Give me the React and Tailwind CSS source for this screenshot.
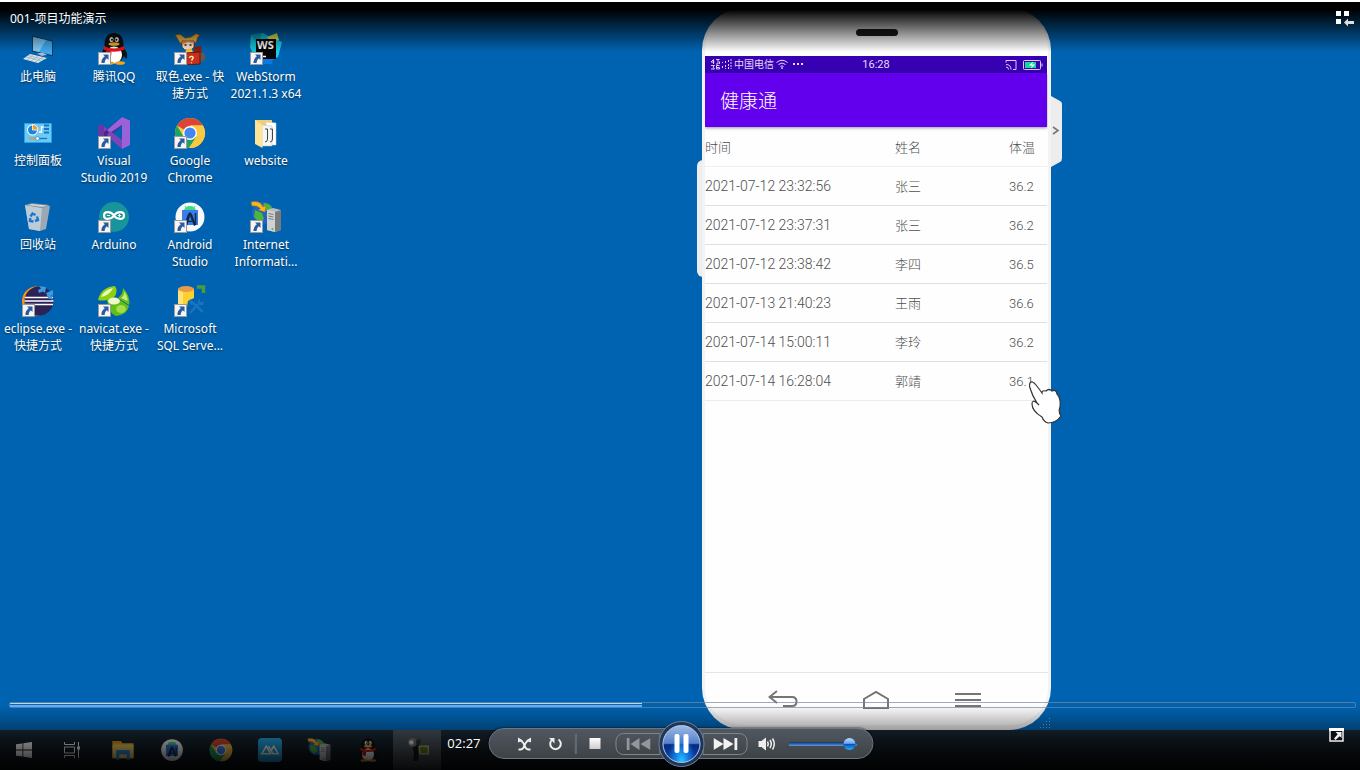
import React, { useState } from 'react';

const records = [
  { time: '2021-07-12 23:32:56', name: '张三', temp: '36.2' },
  { time: '2021-07-12 23:37:31', name: '张三', temp: '36.2' },
  { time: '2021-07-12 23:38:42', name: '李四', temp: '36.5' },
  { time: '2021-07-13 21:40:23', name: '王雨', temp: '36.6' },
  { time: '2021-07-14 15:00:11', name: '李玲', temp: '36.2' },
  { time: '2021-07-14 16:28:04', name: '郭靖', temp: '36.1' },
];

// Desktop and taskbar icons, all on a 32x32 grid
const PcIcon = () => (
  <svg viewBox="0 0 32 32" className="w-full h-full">
    <path d="M10 2.500 31 7.500V23.500L10 18.500Z" fill="#1f3d57" />
    <path d="M11 4 30 8.500V22L11 17.500Z" fill="#3fa9ee" />
    <path d="M11 4 24 7 17 19 11 17.500Z" fill="#7cc9f8" />
    <path d="M15 20.500 20 19.500 25 21.500 20 23Z" fill="#a9bccb" />
    <path d="M8 21 25 25 16 30 1 26Z" fill="#dfe6ec" />
    <path d="M6 22.500 22 26.500M4 24 19 28M11 21.800 5 27M16 23 9 28M21 24 13 29" stroke="#8fa3b3" strokeWidth=".7" />
  </svg>
);

const QQIcon = () => (
  <svg viewBox="0 0 32 32" className="w-full h-full">
    <path d="M7 14Q2 20 4 25L8 21ZM25 14Q31 20 28.500 26L24 21Z" fill="#111" />
    <ellipse cx="16" cy="19.500" rx="10.500" ry="10.500" fill="#111" />
    <path d="M6.500 14Q6 0 16 0T25.500 14Z" fill="#111" />
    <ellipse cx="16" cy="22" rx="8" ry="8.500" fill="#fff" />
    <ellipse cx="11" cy="30" rx="5" ry="1.800" fill="#f3a51b" />
    <ellipse cx="22" cy="30" rx="5" ry="1.800" fill="#f3a51b" />
    <ellipse cx="13.500" cy="6.500" rx="2" ry="2.600" fill="#fff" />
    <ellipse cx="18.800" cy="6.500" rx="2" ry="2.600" fill="#fff" />
    <circle cx="14" cy="6.800" r="1" /><circle cx="18.400" cy="6.800" r="1" />
    <ellipse cx="16" cy="11" rx="5.500" ry="1.800" fill="#f7b21d" />
    <path d="M6 13Q16 18 26 13L26.500 16.500Q16 21 5.500 16.500Z" fill="#e5141c" />
    <path d="M9 17 13.500 18.500 13 24 8.500 23Z" fill="#c90f17" />
  </svg>
);

const JesterIcon = () => (
  <svg viewBox="0 0 32 32" className="w-full h-full">
    <path d="M1 2 6 1 11 5 17 4 22 .5 26 2 24 4 22 10 19 9 9 11 6 10 3 5Z" fill="#e8b64c" stroke="#7a4a12" strokeWidth=".8" />
    <path d="M8 8H20V14L17 17H11L8 14Z" fill="#fbe3cf" stroke="#7b2d14" strokeWidth=".8" />
    <path d="M8 9Q14 5 20 9L18 10 14 9 9 11Z" fill="#d98a34" />
    <path d="M10.500 12h2M15.500 12h2" stroke="#222" strokeWidth="1.700" />
    <path d="M12 17 17 15 20 21 14 24 11 21Z" fill="#f4c542" />
    <path d="M20 14 27 13 28 20 20 19Z" fill="#8e1f12" />
    <circle cx="27" cy="24" r="4.500" fill="#6b5548" />
    <path d="M10 20 26 19V31L10 32Z" fill="#c92f1b" stroke="#4f120a" strokeWidth=".8" />
    <path d="M15.500 25Q16 23 18 23.500T18.500 26L17.500 27.500M17.500 29.300v1" stroke="#ffe9b0" strokeWidth="1.400" fill="none" />
  </svg>
);

const WebStormIcon = () => (
  <svg viewBox="0 0 32 32" className="w-full h-full">
    <path d="M1 2 13 0 20 4 18 26 6 28 0 14Z" fill="#14c3d6" />
    <path d="M1 2 12 0 8 12Z" fill="#0a9fc0" />
    <path d="M17 4 27 0 29 7 24 12Z" fill="#d9e84b" />
    <path d="M24 6 32 9 28 24 20 28Z" fill="#18cdea" />
    <path d="M8 24 24 20 22 31 14 31Z" fill="#0b78e3" />
    <path d="M6 6H26V26H6Z" fill="#060606" />
    <text x="7" y="16" fill="#fff" fontSize="11" fontWeight="700" fontFamily="Noto Sans, sans-serif">WS</text>
    <path d="M9 23.500h7" stroke="#fff" strokeWidth="1.500" />
  </svg>
);

const ControlPanelIcon = () => (
  <svg viewBox="0 0 32 32" className="w-full h-full">
    <rect x="2" y="6" width="28" height="20" rx="1" fill="#2aa3e6" />
    <rect x="3" y="7" width="26" height="18" fill="#6cc9f6" />
    <circle cx="10.500" cy="13" r="5.500" fill="#fff" />
    <circle cx="10.500" cy="13" r="4.500" fill="#1a86d4" />
    <path d="M10.500 13V7.500A5.500 5.500 0 0 1 16 13Z" fill="#f49a25" stroke="#fff" strokeWidth=".8" />
    <path d="M17 15H19.500V10H21.500" stroke="#fff" strokeWidth="1.300" fill="none" />
    <path d="M22 8.500h5M22 12h5M22 15.500h5" stroke="#1a75be" strokeWidth="2" />
    <path d="M7 21.500h18" stroke="#1a75be" strokeWidth="1.300" />
    <path d="M7 21.500h8" stroke="#f49a25" strokeWidth="1.300" />
    <circle cx="15.500" cy="21.500" r="1.800" fill="#fff" stroke="#1c77b8" strokeWidth=".6" />
  </svg>
);

const VisualStudioIcon = () => (
  <svg viewBox="0 0 32 32" className="w-full h-full">
    <path d="M0 9 3 7 25 25 24 32 0 11Z" fill="#7b46b8" />
    <path d="M0 22 3 25 25 8 24 0 0 20Z" fill="#52218a" />
    <path d="M0 9 3 7 6 9.500V22.500L3 25 0 23Z" fill="#6a35a5" />
    <path d="M24 0 32 3.500V28L24 32V8L12 16 9 13Z" fill="#9a62d6" />
    <path d="M24 23 12 14 9 18 24 32Z" fill="#7b46b8" />
  </svg>
);

const ChromeIcon = () => (
  <svg viewBox="0 0 32 32" className="w-full h-full">
    <circle cx="16" cy="16" r="15" fill="#fbc93f" />
    <path d="M16 16 3 8.500A15 15 0 0 1 29 8.500H16Z" fill="#db4437" />
    <path d="M3 8.500A15 15 0 0 0 15 31L22.500 19.750 16 16 9.500 19.750Z" fill="#1da462" />
    <path d="M16 8.500H29A15 15 0 0 1 15 31L22.500 19.750Z" fill="#fbc93f" />
    <circle cx="16" cy="16" r="7" fill="#fff" />
    <circle cx="16" cy="16" r="5.600" fill="#4385f2" />
  </svg>
);

const FolderIcon = () => (
  <svg viewBox="0 0 32 32" className="w-full h-full">
    <path d="M5 3H22V27H5Z" fill="#f1cf72" />
    <path d="M16 5 26 6V28H16Z" fill="#fff" stroke="#c9c9c9" strokeWidth=".5" />
    <path d="M12 8 22 9V29H12Z" fill="#f6f6f6" stroke="#bbb" strokeWidth=".5" />
    <path d="M15 12H17.500V22Q17.500 25 15 25M20 12H22.500V22Q22.500 25 20 25" stroke="#444" fill="none" />
    <path d="M5 3 12.500 8V31L5 27Z" fill="#fce59b" />
  </svg>
);

const RecycleIcon = () => (
  <svg viewBox="0 0 32 32" className="w-full h-full">
    <path d="M3 4 28 5 24 28 18 30 7 28Z" fill="#9aa9b4" />
    <path d="M3 4 20 7 18 30 7 28Z" fill="#bccbd6" />
    <path d="M3 4 10 2 28 4 20 7Z" fill="#7c8d99" />
    <path d="M5 4 10 3 26 4.500 20 6Z" fill="#cdd5da" />
    <path d="M8.500 15.500 10.500 12.500 13.500 14M15 15.500 16 19 13 20M11.500 20.500 8 20 8.200 17" stroke="#1778cf" strokeWidth="2.400" fill="none" />
  </svg>
);

const ArduinoIcon = () => (
  <svg viewBox="0 0 32 32" className="w-full h-full">
    <circle cx="16" cy="16" r="15" fill="#17959a" />
    <path d="M16 14.500C13 10 6 10 6 14.500S13 19 16 14.500 26 10 26 14.500 19 19 16 14.500Z" fill="none" stroke="#fff" strokeWidth="2.200" />
    <path d="M8.800 14.500h3.400M19.800 14.500h3.400M21.500 12.800v3.400" stroke="#fff" strokeWidth="1" />
  </svg>
);

const AndroidStudioIcon = () => (
  <svg viewBox="0 0 32 32" className="w-full h-full">
    <circle cx="16" cy="16" r="14.500" fill="#f7f8f9" />
    <path d="M10 10A6 5 0 0 1 22 10Z" fill="#3ddc84" />
    <path d="M11 5 13 8M21 5 19 8" stroke="#3ddc84" />
    <path d="M8 9H24V24H8Z" fill="#3c7bea" />
    <path d="M10 24 14 13 16 11 18 13 22 24 20 25 16 15 13 25Z" fill="#0b2b48" />
    <path d="M12 19Q16 22 20 19" stroke="#0b2b48" strokeWidth="1.500" fill="none" />
    <path d="M21.500 12v12" stroke="#0b2b48" strokeWidth="1.500" />
  </svg>
);

const IISIcon = () => (
  <svg viewBox="0 0 32 32" className="w-full h-full">
    <circle cx="13" cy="12" r="11" fill="#2463c4" />
    <path d="M14 2Q22 3 22 8L17 10 13 6ZM5 9 12 12 14 18 9 21 4 16Z" fill="#4cb63c" />
    <path d="M16 13 22 11 22 18 18 20Z" fill="#3a9b35" />
    <path d="M1 1Q10-1 13 6L16 4.500 15 11 8.500 9 10.500 7.500Q7 4 2 5Z" fill="#f6b81f" stroke="#b37009" strokeWidth=".6" />
    <path d="M17 9 23 7 31 9V29L25 31 17 29Z" fill="#b9bcbd" />
    <path d="M25 11 31 9V29L25 31Z" fill="#777b7d" />
    <path d="M17 9 25 11V31L17 29Z" fill="#cfd2d3" />
    <path d="M18.500 12.500 23.500 13.500M18.500 15 23.500 16M18.500 17.500 23.500 18.500" stroke="#767a7c" />
    <circle cx="22.500" cy="28" r="1" fill="#43c434" />
  </svg>
);

const EclipseIcon = () => (
  <svg viewBox="0 0 32 32" className="w-full h-full">
    <circle cx="14.500" cy="16" r="14.500" fill="#f7941e" />
    <circle cx="17" cy="16" r="14.500" fill="#2c2255" />
    <path d="M3 12.500H31M2.500 16H31.500M3 19.500H31" stroke="#fff" strokeWidth="1.700" />
    <path d="M17 1 24 2 23 8 21 6.500 17 8 16 5 19 3.500Z" fill="#3d9be5" />
    <path d="M24 8 31 5V11L29 10 31 15 26 13Z" fill="#3d9be5" />
  </svg>
);

const NavicatIcon = () => (
  <svg viewBox="0 0 32 32" className="w-full h-full">
    <path d="M17 1Q3 2 0 15 11 17 17 11 20 6 17 1Z" fill="#8ed00f" />
    <path d="M15 3Q6 5 3 12 12 10 15 3Z" fill="#eefab5" />
    <path d="M25 3Q33 12 31 20L20 13Q25 9 25 3Z" fill="#67bd1b" />
    <path d="M26 6Q30 12 29.500 16L23 13Q27 10 26 6Z" fill="#c5ec73" />
    <path d="M9 15Q15 10 22 15L31 21Q29 30 18 31 11 29 9 15Z" fill="#62bd18" />
    <ellipse cx="16" cy="16" rx="6" ry="3.500" fill="#effac9" />
    <ellipse cx="23" cy="24" rx="5" ry="4" fill="#a4de4b" />
  </svg>
);

const SqlIcon = () => (
  <svg viewBox="0 0 32 32" className="w-full h-full">
    <path d="M4 4H20V13L14 16 12 28H4Z" fill="#fdd02f" />
    <path d="M4 4H9V28H4Z" fill="#fee27a" />
    <ellipse cx="12" cy="4" rx="8" ry="3" fill="#e79a48" />
    <path d="M23 2H29.500V8" stroke="#4b9a3b" strokeWidth="3.500" fill="none" />
    <path d="M16 28 26 17M18 17 29 27" stroke="#1a73bf" strokeWidth="2.500" />
    <path d="M16 14 21 18 18 20 15 18ZM24 15 26 14V17H29L30 16 29 20 25 20Z" fill="#1a73bf" />
  </svg>
);

const ShortcutArrow = () => (
  <svg viewBox="0 0 13 13" className="absolute left-0 bottom-0 w-[13px] h-[13px]">
    <rect x=".5" y=".5" width="12" height="12" fill="#f5f5f5" stroke="#9b9b9b" />
    <path d="M5 2.500H10.500V8L8.800 6.300Q6.500 8 6.500 11H3.500Q3 7 6.800 4.300Z" fill="#2c5aa0" />
  </svg>
);

const desktopIcons = [
  { lines: ['此电脑'], Icon: PcIcon },
  { lines: ['腾讯QQ'], Icon: QQIcon, shortcut: true },
  { lines: ['取色.exe - 快', '捷方式'], Icon: JesterIcon, shortcut: true },
  { lines: ['WebStorm', '2021.1.3 x64'], Icon: WebStormIcon, shortcut: true },
  { lines: ['控制面板'], Icon: ControlPanelIcon },
  { lines: ['Visual', 'Studio 2019'], Icon: VisualStudioIcon, shortcut: true },
  { lines: ['Google', 'Chrome'], Icon: ChromeIcon, shortcut: true },
  { lines: ['website'], Icon: FolderIcon },
  { lines: ['回收站'], Icon: RecycleIcon },
  { lines: ['Arduino'], Icon: ArduinoIcon, shortcut: true },
  { lines: ['Android', 'Studio'], Icon: AndroidStudioIcon, shortcut: true },
  { lines: ['Internet', 'Informati...'], Icon: IISIcon, shortcut: true },
  { lines: ['eclipse.exe -', '快捷方式'], Icon: EclipseIcon, shortcut: true },
  { lines: ['navicat.exe -', '快捷方式'], Icon: NavicatIcon, shortcut: true },
  { lines: ['Microsoft', 'SQL Serve...'], Icon: SqlIcon, shortcut: true },
];

const StartIcon = () => (
  <svg viewBox="0 0 16 16" className="w-4 h-4" fill="#fff">
    <path d="M0 2.300 6.500 1.400V7.600H0ZM7.300 1.300 16 0V7.600H7.300ZM0 8.400H6.500V14.600L0 13.700ZM7.300 8.400H16V16L7.300 14.700Z" />
  </svg>
);

const TaskViewIcon = () => (
  <svg viewBox="0 0 16 16" className="w-4 h-4" fill="none" stroke="#fff">
    <path d="M.5 0V2.500H10.500V0M.5 16V13.500H10.500V16M.5 5H10.500V11H.5ZM14.500 0V16" />
    <path d="M13 4.500h3v3h-3z" fill="#fff" stroke="none" />
  </svg>
);

const ExplorerIcon = () => (
  <svg viewBox="0 0 32 32" className="w-full h-full">
    <path d="M2 4H13L15 7H30V27H2Z" fill="#f0b72c" />
    <path d="M2 9H30V27H2Z" fill="#fcd468" />
    <path d="M2 4H12L14 7H2Z" fill="#d99512" />
    <path d="M7 16H25V29H21V22H11V29H7Z" fill="#2d8fe0" />
  </svg>
);

const MirrorIcon = () => (
  <svg viewBox="0 0 32 32" className="w-full h-full">
    <rect width="32" height="32" rx="5" fill="#22a9e8" />
    <path d="M5 21 11 11 17 21ZM14 11 20 21H27L21 11 18 16" fill="none" stroke="#fff" strokeWidth="2" />
  </svg>
);

const CameraIcon = () => (
  <svg viewBox="0 0 32 32" className="w-full h-full">
    <path d="M17 10H32V22H19Z" fill="#a9b36a" />
    <path d="M20 12H30V20H21Z" fill="#66752a" />
    <path d="M8 5 18 10 18 30 11 31 12 20Z" fill="#161616" />
    <circle cx="10" cy="6" r="6" fill="#777" />
    <circle cx="8.500" cy="6" r="3" fill="#e9e9e9" />
    <path d="M14 4 20 1 21 8 17 12Z" fill="#333" />
  </svg>
);

const taskbarApps = [
  { label: '文件资源管理器', Icon: ExplorerIcon },
  { label: 'Android Studio', Icon: AndroidStudioIcon },
  { label: 'Google Chrome', Icon: ChromeIcon },
  { label: '投屏', Icon: MirrorIcon },
  { label: 'IIS', Icon: IISIcon },
  { label: 'QQ', Icon: QQIcon },
  { label: '录屏', Icon: CameraIcon, active: true },
];

const Phone = () => (
  <div className="absolute left-[702px] top-1.5 bottom-0 w-[349px]">
    <div className="absolute -left-[5px] top-[152px] h-[117px] w-[6px] rounded-l-md bg-[#ededed]" />
    <button aria-label="展开" className="absolute -right-[11px] top-[88px] h-[71px] w-[11px]">
      <svg viewBox="0 0 11 71" className="w-full h-full">
        <path d="M0 0 9 5Q11 6 11 8V62Q11 65 9 66L0 71Z" fill="#ededed" />
        <path d="M2 31 7 34.500 2 38" fill="none" stroke="#777" strokeWidth="1.600" />
      </svg>
    </button>

    <div className="relative flex h-full flex-col overflow-hidden rounded-[42px] border-x-[3px] border-b-[5px] border-[#f3f3f3] bg-[#fefefe]">
      <div className="flex h-12 shrink-0 justify-center border-t-4 border-[#ececec] pt-[17px]">
        <div className="h-[7px] w-[42px] rounded bg-[#1c1c1c]" />
      </div>

      {/* Status bar */}
      <div className="mr-px grid h-[17px] shrink-0 grid-cols-3 items-center bg-[#3700b3] text-[10px] text-[#e4dcf7]">
        <div className="flex items-center gap-[2px] pl-[5px]">
          <svg viewBox="0 0 22 12" className="h-3 w-[22px]" fill="none" stroke="#d9cdf5">
            <path d="M3.500 1.500 1 4H4.500M3.500 1.500V6M6 1.500H9.500M8 1.500V6H6M9.500 3.500V6M1 7.500H4.500L3 9 4.500 11H1M9.500 7.500H6.500V11H9.500V9.500H6.500" />
            <path d="M12.500 4v1M12.500 8v3M15.500 3v2M15.500 7v4M18.500 2v2M18.500 6v5M21 1v10" strokeDasharray="2 1" />
          </svg>
          <span>中国电信</span>
          <svg viewBox="0 0 12 10" className="h-[10px] w-3" fill="none" stroke="#e4dcf7">
            <path d="M.5 3.500Q6-1 11.500 3.500M2.500 5.500Q6 2.500 9.500 5.500M4.500 7.500Q6 6 7.500 7.500" />
            <circle cx="6" cy="9" r=".6" />
          </svg>
          <svg viewBox="0 0 12 4" className="ml-[2px] h-1 w-3" fill="#e4dcf7">
            <path d="M1 1h2v2H1zM5 1h2v2H5zM9 1h2v2H9z" />
          </svg>
        </div>
        <span className="pt-[2px] text-center font-['Roboto',sans-serif] text-[11px]">16:28</span>
        <div className="flex items-center justify-end gap-[6px] pr-[4px]">
          <svg viewBox="0 0 12 10" className="h-[10px] w-3" fill="none" stroke="#d9cdf5">
            <path d="M1 2.500V.5H11V9.500H8M1 4.500Q6 4.500 6 9.500M1 7Q3.500 7 3.500 9.500" />
          </svg>
          <svg viewBox="0 0 20 10" className="h-[10px] w-5">
            <rect x=".5" y=".5" width="17" height="9" rx="1" fill="none" stroke="#d9cdf5" />
            <path d="M2 2H13V8H2Z" fill="#14d89c" />
            <path d="M10 1.500 6 5.500H9L8 8.500 12 4.500H9Z" fill="#fff" />
            <path d="M19 3.500v3" stroke="#d9cdf5" />
          </svg>
        </div>
      </div>
      <h1 className="relative mr-px flex h-[54px] shrink-0 items-center bg-[#6200ee] pt-[3px] pl-[15px] text-[19px] font-light text-white shadow-[0_1px_3px_rgba(0,0,0,0.4)]">健康通</h1>

      {/* Temperature records */}
      <table className="mr-px table-fixed text-left font-['Roboto','Noto_Sans_CJK_SC',sans-serif] text-[13px] font-light text-[#4e4e4e]">
        <colgroup>
          <col className="w-5/9" />
          <col className="w-1/3" />
          <col className="w-1/9" />
        </colgroup>
        <thead>
          <tr className="h-[39px] border-b border-[#f0f0f0]">
            <th className="p-0 pt-[2px] font-light">时间</th>
            <th className="p-0 pt-[2px] font-light">姓名</th>
            <th className="p-0 pt-[2px] font-light">体温</th>
          </tr>
        </thead>
        <tbody>
          {records.map((r) => (
            <tr key={r.time} className="h-[39px] border-b border-[#dfdfdf] last:border-[#ececec]">
              <td className="p-0 pt-[2px] text-[14px]">{r.time}</td>
              <td className="p-0 pt-[2px]">{r.name}</td>
              <td className="p-0 pt-[2px]">{r.temp}</td>
            </tr>
          ))}
        </tbody>
      </table>

      {/* Navigation keys */}
      <div className="mt-auto flex h-[53px] shrink-0 justify-center gap-16 border-t border-[#e6e6e6] pt-[17px] pr-1">
        <button aria-label="返回" className="h-5 w-[30px]">
          <svg viewBox="0 0 30 20" className="w-full h-full" fill="none" stroke="#757575" strokeWidth="2">
            <path d="M9 1 1.500 7 9 13M2 7H24Q28.500 7 28.500 11.500T24 16H15" />
          </svg>
        </button>
        <button aria-label="主页" className="h-5 w-[28px]">
          <svg viewBox="0 0 28 20" className="w-full h-full" fill="none" stroke="#757575" strokeWidth="2">
            <path d="M2 18V9L14 2 26 9V18Z" />
          </svg>
        </button>
        <button aria-label="菜单" className="h-5 w-[28px]">
          <svg viewBox="0 0 28 20" className="w-full h-full" stroke="#757575" strokeWidth="2">
            <path d="M1 4H27M1 10H27M1 16H27" />
          </svg>
        </button>
      </div>
    </div>

    {/* Resize grip */}
    <svg viewBox="0 0 12 12" className="absolute right-0 bottom-0 h-3 w-3" fill="#86a3bc">
      <path d="M10 0h1v1h-1zM10 3h1v1h-1zM7 3h1v1H7zM10 6h1v1h-1zM7 6h1v1H7zM4 6h1v1H4zM10 9h1v1h-1zM7 9h1v1H7zM4 9h1v1H4zM1 9h1v1H1z" />
    </svg>

    {/* Hand pointer */}
    <svg viewBox="0 0 34 44" className="absolute left-[327px] top-[373px] h-11 w-[34px]">
      <path
        d="M1 2Q3-1 7 4Q11 9 13 12Q13 9 17 10Q20 7 23 10Q27 8 28 13Q32 17 31 26Q29 31 32 35Q27 42 19 42Q15 41 13 36Q3 30 3 23Q3 18 8 22Q3 14 1 7Q0 4 1 2Z"
        fill="#fff" stroke="#333" strokeWidth="1.200"
      />
      <path d="M8 22 10 24" stroke="#333" strokeWidth="1.200" />
    </svg>
  </div>
);

const App = () => {
  const [position, setPosition] = useState(47);
  const [volume, setVolume] = useState(96);

  return (
    <div className="relative flex h-screen flex-col overflow-hidden border-t-2 border-white bg-[#0063b1] font-['Noto_Sans','Noto_Sans_CJK_SC',sans-serif] text-xs text-white">

      {/* Desktop */}
      <main className="relative flex-1">
        <div className="grid w-[304px] auto-rows-[84px] grid-cols-4 pt-[31px]">
          {desktopIcons.map(({ lines, Icon, shortcut }) => (
            <a key={lines[0]} href="#" className="flex flex-col items-center whitespace-nowrap text-center leading-[17px] [text-shadow:0_1px_2px_rgba(0,0,0,0.6)]">
              <div className="relative mb-[3px] h-8 w-8">
                <Icon />
                {shortcut && <ShortcutArrow />}
              </div>
              {lines.map((line) => <span key={line}>{line}</span>)}
            </a>
          ))}
        </div>
        <Phone />
      </main>

      {/* Taskbar */}
      <footer className="flex h-10 shrink-0 bg-linear-to-b from-[#1a2b38] to-[#0b1116]">
        <button aria-label="开始" className="flex w-12 items-center justify-center"><StartIcon /></button>
        <button aria-label="任务视图" className="flex w-12 items-center justify-center"><TaskViewIcon /></button>
        <div className="flex gap-px pl-[3px]">
          {taskbarApps.map(({ label, Icon, active }) => (
            <button
              key={label}
              aria-label={label}
              className={`flex w-12 items-center justify-center ${active ? 'bg-[#4a545c]' : ''}`}
            >
              <span className="h-6 w-6"><Icon /></span>
            </button>
          ))}
        </div>
      </footer>

      {/* Player title overlay */}
      <div className="absolute inset-x-0 top-0 flex h-[50px] items-start justify-between bg-linear-to-b from-black from-15% to-transparent pt-2 pr-[5px] pl-[10px]">
        <span className="leading-[17px]">001-项目功能演示</span>
        <button aria-label="切换到媒体库" className="mt-px h-4 w-5">
          <svg viewBox="0 0 20 16" className="w-full h-full" fill="#fff">
            <path d="M1 0h5v5H1zM9 0h5v5H9zM1 8h5v5H1z" />
            <path d="M9 11.500 13 7.500V10H19V13H13V15.500Z" fill="#ddd" />
          </svg>
        </button>
      </div>

      {/* Player controls overlay */}
      <div className="absolute inset-x-0 bottom-0 h-[72px] bg-linear-to-b from-transparent from-10% via-black/35 via-45% to-black/90">
        <input
          type="range"
          aria-label="播放进度"
          value={position}
          onChange={(e) => setPosition(Number(e.target.value))}
          className="absolute top-1 right-1 left-[9px] h-[6px] appearance-none rounded-xs border border-[#78899c]/70 bg-no-repeat [&::-webkit-slider-thumb]:h-1 [&::-webkit-slider-thumb]:w-1 [&::-webkit-slider-thumb]:appearance-none"
          style={{
            backgroundImage: 'linear-gradient(#a6dcff 0 1px, #1460b5 1px 2px, #62aef5 2px 4px)',
            backgroundSize: `${position}% 100%`,
          }}
        />

        <div className="absolute bottom-[11px] left-1/2 ml-px flex h-[31px] w-[385px] -translate-x-1/2 items-center rounded-full border border-[#6b7784] bg-linear-to-b from-[#505860] to-[#3e4246] pl-[25px] shadow-[0_0_2px_#000]">
          <span className="absolute right-full mr-[9px] font-['Open_Sans',sans-serif] text-[13px]">02:27</span>
          <button aria-label="无序播放" className="h-4 w-5">
            <svg viewBox="0 0 20 16" className="w-full h-full" fill="none" stroke="#eee" strokeWidth="2">
              <path d="M4 13.500H6Q9 13 10 9.500T14.500 4M16 13.500H14Q11 13 10 9.500T5.500 4" />
              <path d="M3.500 6.500V1.500L8.500 4.500ZM16.500 6.500V1.500L11.500 4.500Z" fill="#eee" stroke="none" />
            </svg>
          </button>
          <button aria-label="重复播放" className="ml-[11px] h-4 w-5">
            <svg viewBox="0 0 20 16" className="w-full h-full" fill="none" stroke="#eee" strokeWidth="2">
              <path d="M13 3.500A5.300 5.300 0 1 1 7 3.500" />
              <path d="M3.500 2H9V7.500Z" fill="#eee" stroke="none" />
            </svg>
          </button>
          <div className="ml-[9px] h-5 w-[2px] border-l border-black/40 bg-[#7b858e]" />
          <button aria-label="停止" className="ml-[13px] h-[11px] w-[11px] bg-linear-to-b from-white to-[#ccc]" />
          <button aria-label="上一个" className="ml-[15px] flex h-[22px] w-[45px] items-center justify-center rounded-l-lg border border-[#7e868c]">
            <svg viewBox="0 0 24 12" className="h-3 w-6" fill="#92979b">
              <path d="M0 0h3v12H0zM13 0v12L4 6zM24 0v12L14 6z" />
            </svg>
          </button>
          <button aria-label="暂停" className="relative -mx-[2px] h-[46px] w-[46px] shrink-0 rounded-full border border-[#6a82a5] bg-[#223553] p-[3px]">
            <span className="flex h-full w-full items-center justify-center gap-1 rounded-full border border-[#b4cff0] bg-[radial-gradient(ellipse_at_50%_105%,#2cd4ff_0,#1583e8_25%,transparent_55%),linear-gradient(#9bb9e6_0,#5580c8_48%,#062a82_52%,#0a4bb0_100%)]">
              <i className="h-[19px] w-[5px] rounded-xs bg-white" />
              <i className="h-[19px] w-[5px] rounded-xs bg-white" />
            </span>
          </button>
          <button aria-label="下一个" className="flex h-[22px] w-[45px] items-center justify-center rounded-r-lg border border-[#7e868c]">
            <svg viewBox="0 0 24 12" className="h-3 w-6" fill="#f2f2f2">
              <path d="M0 0v12L10 6zM10 0v12L20 6zM21 0h3v12H21z" />
            </svg>
          </button>
          <button aria-label="静音" className="ml-[10px] h-4 w-[19px] shrink-0">
            <svg viewBox="0 0 19 16" className="w-full h-full" fill="none" stroke="#eee" strokeWidth="1.500">
              <path d="M1 5H4L8.500 1.500V14.500L4 11H1Z" fill="#eee" stroke="none" />
              <path d="M10 5.500Q11.500 8 10 10.500M12.500 4Q15 8 12.500 12M15 2.500Q18.500 8 15 13.500" />
            </svg>
          </button>
          <input
            type="range"
            aria-label="音量"
            value={volume}
            onChange={(e) => setVolume(Number(e.target.value))}
            className="ml-[12px] h-[4px] w-[69px] appearance-none rounded-full bg-linear-to-b from-[#16305f] to-[#5c9df2] [&::-webkit-slider-thumb]:h-3 [&::-webkit-slider-thumb]:w-3 [&::-webkit-slider-thumb]:appearance-none [&::-webkit-slider-thumb]:rounded-full [&::-webkit-slider-thumb]:bg-[linear-gradient(#bcdcff_0,#6ba6ee_45%,#0a4cb8_50%,#22b4ff_100%)]"
          />
        </div>

        <button aria-label="退出全屏" className="absolute right-4 bottom-7 h-[14px] w-[15px]">
          <svg viewBox="0 0 15 14" className="w-full h-full">
            <path d="M1 2H14V13H1Z" fill="#0c0f12" stroke="#eee" strokeWidth="1.500" />
            <path d="M0 0H15V3H0Z" fill="#fff" />
            <path d="M6.500 4H12.500V10L10.700 8.200 6.500 12 5 10.500 8.700 6.200Z" fill="#eee" />
          </svg>
        </button>
      </div>
    </div>
  );
};

export default App;
